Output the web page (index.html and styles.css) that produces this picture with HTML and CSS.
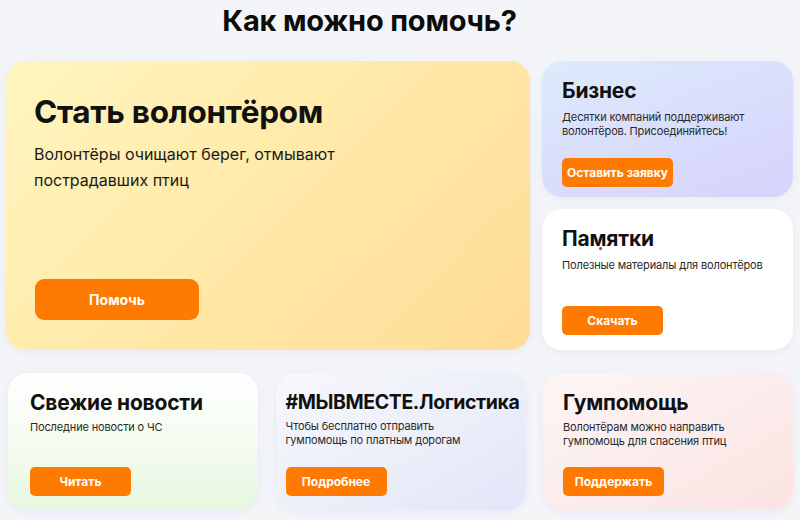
FILE: index.html
```html
<!DOCTYPE html>
<html lang="ru">
<head>
<meta charset="utf-8">
<title>Как можно помочь?</title>
<link rel="stylesheet" href="styles.css">
</head>
<body>
<main class="page">
  <h1 class="page-title">Как можно помочь?</h1>
  <section class="row-top">
    <article class="card card-big">
      <h2 class="big-title">Стать волонтёром</h2>
      <p class="big-text">Волонтёры очищают берег, отмывают<br>пострадавших птиц</p>
      <a class="btn btn-big" href="#">Помочь</a>
    </article>
    <div class="side-col">
      <article class="card card-business">
        <h3 class="card-title">Бизнес</h3>
        <p class="card-text">Десятки компаний поддерживают<br>волонтёров. Присоединяйтесь!</p>
        <a class="btn btn-wide" href="#">Оставить заявку</a>
      </article>
      <article class="card card-memo">
        <h3 class="card-title memo-title">Памятки<span class="red-dot"></span></h3>
        <p class="card-text">Полезные материалы для волонтёров</p>
        <a class="btn" href="#">Скачать</a>
      </article>
    </div>
  </section>
  <section class="row-bottom">
    <article class="card card-news">
      <h3 class="card-title">Свежие новости</h3>
      <p class="card-text">Последние новости о ЧС</p>
      <a class="btn" href="#">Читать</a>
    </article>
    <article class="card card-logistics">
      <h3 class="card-title logistics-title">#МЫВМЕСТЕ.Логистика</h3>
      <p class="card-text">Чтобы бесплатно отправить<br>гумпомощь по платным дорогам</p>
      <a class="btn" href="#">Подробнее</a>
    </article>
    <article class="card card-aid">
      <h3 class="card-title">Гумпомощь</h3>
      <p class="card-text">Волонтёрам можно направить<br>гумпомощь для спасения птиц</p>
      <a class="btn" href="#">Поддержать</a>
    </article>
  </section>
</main>
</body>
</html>
```
FILE: styles.css
```css
* { box-sizing: border-box; }
html, body { margin: 0; padding: 0; }
body {
  background: #f4f5f9;
  font-family: Inter, "Noto Sans", sans-serif;
  color: #111;
  width: 800px;
  height: 520px;
  overflow: hidden;
}
.page {
  padding: 0 7px 0 6px;
}
.page-title {
  margin: 0;
  height: 61px;
  padding-top: 3px;
  text-align: center;
  font-size: 29px;
  font-weight: 700;
  letter-spacing: -0.2px;
  line-height: 36px;
  color: #0c0c0c;
  padding-right: 60px;
}
.row-top {
  display: flex;
  gap: 12px;
  height: 289px;
}
.card {
  border-radius: 20px;
  display: flex;
  flex-direction: column;
  box-shadow: 0 2px 8px rgba(150, 160, 190, 0.12);
}
.card-big {
  flex: 1;
  background: linear-gradient(135deg, #fff6bf 0%, #ffe9a8 50%, #ffdc98 100%);
  padding: 31px 28px 30px 28px;
}
.big-title {
  margin: 0;
  font-size: 31.5px;
  font-weight: 700;
  line-height: 40px;
  letter-spacing: -0.3px;
}
.big-text {
  margin: 9px 0 0;
  font-size: 16px;
  line-height: 26px;
  color: #1a1a1a;
}
.btn {
  display: flex;
  align-items: center;
  justify-content: center;
  background: #ff7a00;
  color: #fff;
  text-decoration: none;
  font-weight: 700;
  font-size: 12px;
  border-radius: 5px;
  width: 101px;
  height: 29px;
  margin-top: auto;
}
.btn-big {
  width: 164px;
  height: 41px;
  border-radius: 9px;
  font-size: 14px;
  margin-left: 1px;
}
.btn-wide { width: 111px; }
.side-col {
  width: 251px;
  display: flex;
  flex-direction: column;
  gap: 12px;
}
.side-col .card { flex: 1; }
.card-business {
  background: linear-gradient(160deg, #dcebfc 0%, #d9dcfb 60%, #d6d3fb 100%);
  padding: 17px 20px 10px 20px;
}
.card-memo {
  background: #ffffff;
  padding: 17px 20px 15px 20px;
}
.card-title {
  margin: 0;
  font-size: 21px;
  font-weight: 700;
  line-height: 26px;
  letter-spacing: -0.2px;
}
.logistics-title {
  font-size: 19.5px;
  letter-spacing: -0.4px;
}
.card-text {
  margin: 6px 0 0;
  font-size: 11px;
  line-height: 14px;
  letter-spacing: -0.15px;
  color: #2a2a2a;
}
.memo-title { position: relative; align-self: flex-start; }
.red-dot {
  position: absolute;
  left: 37px;
  top: 21px;
  width: 3px;
  height: 3px;
  border-radius: 50%;
  background: #d0242b;
}
.row-bottom {
  display: grid;
  grid-template-columns: 250px 250px 250px;
  gap: 17.5px;
  margin-top: 23px;
  height: 137px;
  padding-left: 2px;
}
.row-bottom .card { padding: 17px 22px 14px 22px; }
.row-bottom .card-text { margin-top: 4px; }
.card-news {
  background: linear-gradient(180deg, #ffffff 0%, #f3fbef 55%, #e6f7e0 100%);
}
.card-logistics {
  background: linear-gradient(150deg, #f7f8fc 0%, #eceef9 55%, #e2e5f8 100%);
}
.row-bottom .card-logistics { padding-left: 10px; padding-top: 16px; }
.card-aid {
  background: linear-gradient(150deg, #fdf6f5 0%, #fbeceb 55%, #fbe3e2 100%);
}
.row-bottom .card-aid { padding-left: 20px; }
```
